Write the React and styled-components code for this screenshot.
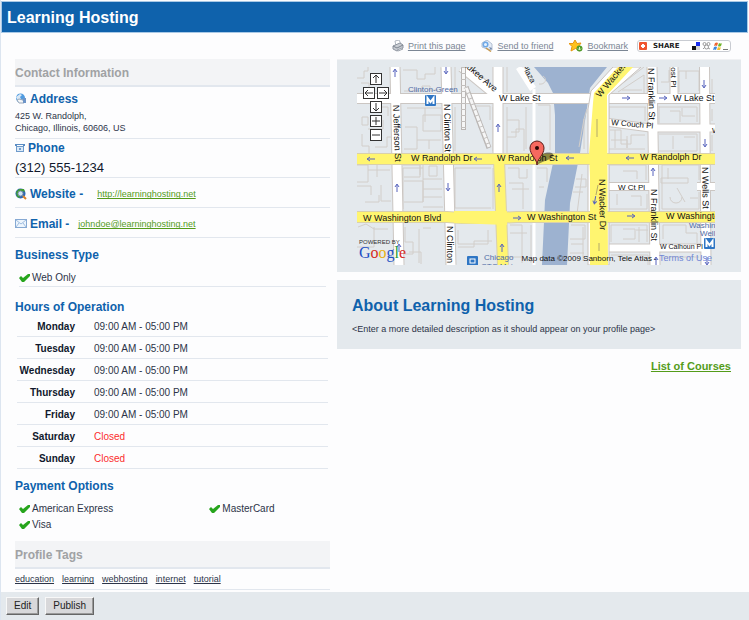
import React from 'react';
import styled, { createGlobalStyle } from 'styled-components';

const color = {
  blue: '#0f62ac',
  green: '#549c1a',
  text: '#2c3448',
  muted: '#a0a2a4',
  panel: '#e4e9ed',
  line: '#e2e7ee',
  red: '#fb2c2c',
};

const HOURS = [
  { day: 'Monday', time: '09:00 AM - 05:00 PM' },
  { day: 'Tuesday', time: '09:00 AM - 05:00 PM' },
  { day: 'Wednesday', time: '09:00 AM - 05:00 PM' },
  { day: 'Thursday', time: '09:00 AM - 05:00 PM' },
  { day: 'Friday', time: '09:00 AM - 05:00 PM' },
  { day: 'Saturday', time: null },
  { day: 'Sunday', time: null },
];

const PAYMENTS = ['American Express', 'MasterCard', 'Visa'];

const TAGS = ['education', 'learning', 'webhosting', 'internet', 'tutorial'];

export default function App() {
  const hoursRows = HOURS.map(({ day, time }) => (
    <tr key={day}>
      <Day scope="row">{day}</Day>
      <Time $closed={!time}>{time || 'Closed'}</Time>
    </tr>
  ));

  return (
    <Page>
      <GlobalStyle />
      <Header>
        <h1>Learning Hosting</h1>
      </Header>
      <Toolbar>
        <ToolLink href="#print">
          <PrintIcon />
          <span>Print this page</span>
        </ToolLink>
        <ToolLink href="#send">
          <SendIcon />
          <span>Send to friend</span>
        </ToolLink>
        <ToolLink href="#bookmark">
          <StarIcon />
          <span>Bookmark</span>
        </ToolLink>
        <ShareButton type="button">
          <SharePlusIcon />
          <span>SHARE</span>
          <ShareSitesIcon />
        </ShareButton>
      </Toolbar>
      <Columns>
        <div>
          <PanelTitle>Contact Information</PanelTitle>
          <AddressBlock>
            <Title>
              <AddressIcon />
              Address
            </Title>
            <address>
              425 W. Randolph,
              <br />
              Chicago, Illinois, 60606, US
            </address>
          </AddressBlock>
          <PhoneBlock>
            <Title>
              <PhoneIcon />
              Phone
            </Title>
            <p>(312) 555-1234</p>
          </PhoneBlock>
          <ContactRow $gap="14px">
            <Title>
              <WebsiteIcon />
              Website -
            </Title>
            <GreenLink href="#website">http://learninghosting.net</GreenLink>
          </ContactRow>
          <ContactRow $gap="9px">
            <Title>
              <EmailIcon />
              Email -
            </Title>
            <GreenLink href="#email">johndoe@learninghosting.net</GreenLink>
          </ContactRow>
          <Section>
            <Title>Business Type</Title>
            <CheckList $underlined>
              <CheckItem>
                <CheckIcon />
                Web Only
              </CheckItem>
            </CheckList>
          </Section>
          <Section>
            <Title>Hours of Operation</Title>
            <HoursTable>
              <tbody>{hoursRows}</tbody>
            </HoursTable>
          </Section>
          <Section>
            <Title>Payment Options</Title>
            <CheckList>
              {PAYMENTS.map((name) => (
                <CheckItem key={name}>
                  <CheckIcon />
                  {name}
                </CheckItem>
              ))}
            </CheckList>
          </Section>
          <PanelTitle>Profile Tags</PanelTitle>
          <Tags>
            {TAGS.map((tag) => (
              <a key={tag} href={`#${tag}`}>
                {tag}
              </a>
            ))}
          </Tags>
        </div>
        <RightColumn>
          <MapPanel>
            <MapFrame>
              <MapDrawing />
              <MapControls />
              <MapCredit>
                Map data ©2009 Sanborn, Tele Atlas - <a href="#terms">Terms of Use</a>
              </MapCredit>
            </MapFrame>
          </MapPanel>
          <About>
            <h2>About Learning Hosting</h2>
            <p>&lt;Enter a more detailed description as it should appear on your profile page&gt;</p>
          </About>
          <Courses href="#courses">List of Courses</Courses>
        </RightColumn>
      </Columns>
      <Footer>
        <FooterButton type="button">Edit</FooterButton>
        <FooterButton type="button">Publish</FooterButton>
      </Footer>
    </Page>
  );
}

function MapControls() {
  return (
    <Controls>
      <MapButton type="button" $area="up" aria-label="pan up">
        <Glyph d="M5 9V1M2 4l3-3 3 3" />
      </MapButton>
      <MapButton type="button" $area="left" aria-label="pan left">
        <Glyph d="M9 5H1M4 2L1 5l3 3" />
      </MapButton>
      <MapButton type="button" $area="right" aria-label="pan right">
        <Glyph d="M1 5h8M6 2l3 3-3 3" />
      </MapButton>
      <MapButton type="button" $area="down" aria-label="pan down">
        <Glyph d="M5 1v8M2 6l3 3 3-3" />
      </MapButton>
      <MapButton type="button" $area="in" aria-label="zoom in">
        <Glyph d="M1 5h8M5 1v8" />
      </MapButton>
      <MapButton type="button" $area="out" aria-label="zoom out">
        <Glyph d="M1 5h8" />
      </MapButton>
    </Controls>
  );
}

function Glyph({ d }) {
  return (
    <svg width="10" height="10" viewBox="0 0 10 10" fill="none" stroke="#333">
      <path d={d} />
    </svg>
  );
}

// blue one-way arrows: x, y, rotation
const ARROWS = [
  [38, 6, -90],
  [89, 3, 90],
  [141, 61, -90],
  [14, 92, 180],
  [121, 92, 180],
  [213, 91, 180],
  [273, 91, 180],
  [269, 31, 0],
  [306, 31, 0],
  [347, 17, 90],
  [348, 76, 90],
  [40, 121, -90],
  [91, 120, 90],
  [142, 121, -90],
  [145, 181, -90],
  [160, 151, 0],
  [274, 149, 0],
  [238, 133, 100],
  [296, 105, -90],
  [299, 194, -90],
  [350, 194, 90],
  [42, 181, -90],
];

function MapDrawing() {
  return (
    <MapSvg viewBox="0 0 358 198" preserveAspectRatio="xMidYMid slice" role="img" aria-label="Map">
      <rect width="358" height="198" fill="#e4e9ed" />
      {/* river */}
      <path
        d="M177 0L191 16L196 26L198 48V86L196 96L188 133L185 198H210L213 136L221 96L223 86L230 41L233 21L250 0Z"
        fill="#9db2d0"
      />
      {/* building outlines */}
      <g fill="none" stroke="#d2ceca">
        <path d="M0 11h7V4h4V0M4 16h8v5M5 50h6v8H5zM11 62h15v-9M5 67v12h7v7M18 80h12v-10h5M14 40h17v9" />
        <path d="M46 3h14v9h8v-5h10V0M47 24h18v-5h8v4h8M50 41h18v14M68 41h16M66 48h18v16H66zM48 60h12v22H47M60 73h24M72 82v-9" />
        <path d="M46 98h17v12H47M63 98v10M47 114h19v21H47M66 112h19M66 98v37M66 122h19M66 130h19M72 99h8v10h-8z" />
        <path d="M0 98h11v17H0M11 103h22M20 98v12M0 119h14v9M24 118v16h10M8 135h14v-7M46 142V101h20M66 140h20" />
        <path d="M1 160l8-3 8 5h14M48 160v15h8v12h-8M66 161h8M62 162v34M101 163v14h30v-14M101 180h16v-6h18M17 160v20H0M52 185h12v12" />
        <path d="M98 0v24M98 40v44M98 101v40h36M98 101h36M98 159v38M136 101v41M119 39h14v14M136 40v44M114 3v10" />
        <path d="M150 0v25M150 40v46M150 53h12v12h-8M150 70h9v-8h8v22M151 101h11v10h8v-9M152 116h14v26M155 122h17M169 40v42" />
        <path d="M153 158h12v38M153 166h17M174 158v38M151 190h14M181 38h12v45M180 101h10v14M182 120h5" />
        <path d="M186 9c5 3 2 9-4 8M227 52v30M222 80l5-28 3-10M225 107l-5 40M219 112h10v8h-11M216 125h10M214 158h14v14h-15M214 177h12M226 160v34M213 186h14" />
        <path d="M252 39v13M252 40h37M288 40v14M253 63h11v14h10v-9h14M252 82h36M258 63v18M270 69v12M254 73h16v8" />
        <path d="M252 98h37v15M252 98v15M266 104h14v8M252 126v16M252 142h38v-15M260 127v11M274 129h10v10M254 158h36v17M254 158v17M266 162h12v10h-12M282 160v15M254 188h37v10M279 163h12" />
        <path d="M302 39v17M302 40h38v15M313 44h10v11M325 41v8h13M302 67h38v17M302 84h38M316 69v13M327 70h11M304 15h8v-12M322 25V4h20v20M329 4v8M355 42v12M355 68v16M355 12v14" />
        <path d="M305 98h37v15M305 98v44h37v-17M304 111h27v5h-27zM313 130c0 8 12 8 12 0M320 121l8 14M333 131h8M311 101v11M306 158h23v8h11v10M306 158v14M306 190h36" />
        <path d="M253 26L287 0M287 26V8L261 25M265 23h20" />
      </g>
      {/* side streets, casing below and white on top */}
      <g fill="none" stroke="#cbc6c2">
        <g strokeWidth="11">
          <path d="M0 31.500H358M38 0L42 198M89 0L94 198M141 0V90M295 0L298 198M347.500 0L349 198" />
          <path d="M105 0L139 28" />
        </g>
        <g strokeWidth="9">
          <path d="M317 0V30M248 55L293 61H358M250 119.500H296M340 119.500H358M250 181H347" />
        </g>
      </g>
      <g fill="none" stroke="#fff">
        <g strokeWidth="9">
          <path d="M0 31.500H358M38 0L42 198M89 0L94 198M141 0V90M295 0L298 198M347.500 0L349 198" />
          <path d="M105 0L139 28" />
        </g>
        <g strokeWidth="7">
          <path d="M317 0V30M248 55L293 61H358M250 119.500H296M340 119.500H358M250 181H347" />
        </g>
        <path d="M177 22V198" strokeWidth="3" />
        <path d="M162 0L176 22" strokeWidth="7" />
      </g>
      <path d="M231 198V42L234 24L256 0H284L252 28V198Z" fill="#fff" stroke="#c8c2be" />
      {/* rail tracks */}
      <g fill="none">
        <path d="M106.500 0V63M109 20L132 81" stroke="#b9b5b3" strokeWidth="5" />
        <path d="M106.500 0V62M109 20L132 80" stroke="#f6f6f6" strokeWidth="3" />
        <path d="M106.500 0V63M109 20L132 81" stroke="#c2bfbd" strokeWidth="5" strokeDasharray="1 5" />
      </g>
      {/* main roads */}
      <g fill="none" stroke="#d9d0ac" strokeWidth="12">
        <path d="M0 92H358M0 150H90L105 151H140L160 150H358M142 92L146 198" />
      </g>
      <path d="M0 92H358M0 150H90L105 151H140L160 150H358M142 92L146 198" fill="none" stroke="#fff570" strokeWidth="10" />
      <path d="M97 144H150V158L97 156Z" fill="#fff570" />
      <path d="M233 198V110L232 87L236 36L237 26L261 0H276L250 28L251 198Z" fill="#fff570" />
      <path d="M240 52V70M241 118L239 128M242 176V184" stroke="#b3a96a" />
      {ARROWS.map(([x, y, turn]) => (
        <path
          key={`${x}-${y}`}
          d="M-4 0H3M1 -2L4 0L1 2"
          transform={`translate(${x} ${y}) rotate(${turn})`}
          fill="none"
          stroke="#5663bd"
        />
      ))}
      <MapLabels>
        <text x="54" y="94">W Randolph Dr</text>
        <text x="140" y="94">W Randolph St</text>
        <text x="283" y="93">W Randolph Dr</text>
        <text x="6" y="154">W Washington Blvd</text>
        <text x="170" y="153">W Washington St</text>
        <text x="309" y="152">W Washington St</text>
        <text x="142" y="34">W Lake St</text>
        <text x="316" y="34">W Lake St</text>
        <text transform="translate(36 38) rotate(88)">N Jefferson St</text>
        <text transform="translate(87 37) rotate(89)">N Clinton St</text>
        <text transform="translate(90 159) rotate(90)">N Clinton St</text>
        <text transform="translate(291 1) rotate(89)">N Franklin St</text>
        <text transform="translate(294 122) rotate(90)">N Franklin St</text>
        <text transform="translate(242 112) rotate(89)">N Wacker Dr</text>
        <text transform="translate(243 31) rotate(-50)">W Wacker Dr</text>
        <text transform="translate(345 100) rotate(89)">N Wells St</text>
        <text transform="translate(92 -14) rotate(41)">Milwaukee Ave</text>
      </MapLabels>
      <MapLabels $size="8px">
        <text transform="translate(314 -5) rotate(90)">Post Pl</text>
        <text transform="translate(161 -8) rotate(62)">N Plaza</text>
        <text transform="translate(254 58) rotate(5)">W Couch Pl</text>
        <text x="261" y="123">W Ct Pl</text>
        <text x="355" y="66">W Couch Pl</text>
      </MapLabels>
      <MapLabels $size="7px">
        <text x="303" y="182">W Calhoun Pl</text>
      </MapLabels>
      <MapLabels $size="8px" $blue>
        <text x="51" y="25">Clinton-Green</text>
        <text x="127" y="193">Chicago</text>
        <text x="124" y="202">CTC Metra</text>
        <text x="332" y="161">Washington</text>
        <text x="343" y="169">Wells</text>
      </MapLabels>
      {[
        [68, 28],
        [347, 171],
      ].map(([x, y]) => (
        <g key={x}>
          <rect x={x} y={y} width="11" height="11" rx="1" fill="#2f76c4" />
          <path
            d={`M${x + 2.5} ${y + 9}V${y + 3}L${x + 5.5} ${y + 7}L${x + 8.5} ${y + 3}V${y + 9}`}
            fill="none"
            stroke="#fff"
            strokeWidth="2"
          />
        </g>
      ))}
      <rect x="110" y="189" width="11" height="11" rx="1" fill="#2f76c4" />
      <rect x="113" y="192" width="5" height="4" fill="none" stroke="#fff" />
      {/* marker with its shadow */}
      <path d="M180 98L186 87C191 84 198 86 196 89C194 93 188 93 180 98Z" fill="#000" opacity="0.450" />
      <path d="M180 98C180 92 173 88 173 81A7 7 0 0 1 187 81C187 88 180 92 180 98Z" fill="#f7695f" stroke="#5b1c18" />
      <circle cx="180" cy="81" r="2" fill="#2a0604" />
      <PoweredBy x="2" y="177">POWERED BY</PoweredBy>
      <GoogleLogo x="2" y="191">
        <tspan fill="#1d4fc4">G</tspan>
        <tspan fill="#d62a1f">o</tspan>
        <tspan fill="#e8b012">o</tspan>
        <tspan fill="#1d4fc4">g</tspan>
        <tspan fill="#1f9a38">l</tspan>
        <tspan fill="#d62a1f">e</tspan>
      </GoogleLogo>
    </MapSvg>
  );
}

function PrintIcon() {
  return (
    <svg width="12" height="12" viewBox="0 0 12 12">
      <path d="M3 1l4-1 2 4-5 2z" fill="#fff" stroke="#b4bac3" />
      <path d="M1 6l7-3 3 2v3l-6 3-4-2z" fill="#c9cdd3" stroke="#8d949f" />
      <path d="M1 6l4 2 6-3" fill="none" stroke="#7d8591" />
      <path d="M5 10l5-2 1 1-5 2z" fill="#fff" stroke="#9aa1ab" />
    </svg>
  );
}

function SendIcon() {
  return (
    <svg width="12" height="12" viewBox="0 0 12 12">
      <path d="M1 3l5-3 5 4v6l-5-1-5-2z" fill="#e3ebf6" stroke="#b3bfd2" />
      <circle cx="4.500" cy="4.500" r="3" fill="#6fa8e6" />
      <circle cx="4.500" cy="4.500" r="1.500" fill="#e6f2ff" />
      <path d="M5 8l5 3.500" stroke="#c79a52" strokeWidth="1.500" />
      <path d="M8 7l3 1-1 2z" fill="#6f83a8" />
    </svg>
  );
}

function StarIcon() {
  return (
    <svg width="14" height="14" viewBox="0 0 14 14">
      <path d="M6 1l2 3.500 4-.5-2.500 3.500L11 12 6.500 9.500 2 12l1-4.500L0 4.500h4z" fill="#ffc21c" stroke="#e8960f" />
      <circle cx="10.500" cy="9.500" r="3" fill="#4f9a28" />
      <path d="M10.500 8v3M9 9.500l1.500 1.500L12 9.500" fill="none" stroke="#d8f0c4" />
    </svg>
  );
}

function SharePlusIcon() {
  return (
    <svg width="8" height="8" viewBox="0 0 8 8">
      <rect width="8" height="8" rx="1" fill="#f0552f" />
      <path d="M4 2v4M2 4h4" stroke="#fff" strokeWidth="2" />
    </svg>
  );
}

function ShareSitesIcon() {
  return (
    <svg width="37" height="8" viewBox="0 0 37 8">
      <rect x="4" width="4" height="4" fill="#1b2ff0" />
      <rect y="4" width="4" height="4" fill="#111" />
      <rect x="4" y="4" width="4" height="4" fill="#d5d5d5" />
      <g fill="none" stroke="#9c9c9c">
        <circle cx="12.500" cy="2" r="1.500" />
        <circle cx="16.500" cy="2" r="1.500" />
        <circle cx="14.500" cy="5" r="2" />
        <path d="M11 7l2-2M18 7l-2-1" />
      </g>
      <path d="M23 1q2-1 3 0l-1 3q-1-1-3 0z" fill="#f0652f" />
      <path d="M27 1q2 1 3 0l-1 3q-2 1-3 0z" fill="#6fb52c" />
      <path d="M22 5q2-1 3 0l-1 3q-1-1-3 0z" fill="#3d86dd" />
      <path d="M26 5q2 1 3 0l-1 3q-2 1-3 0z" fill="#f6c02e" />
      <path d="M31 7.500h5" stroke="#777" />
    </svg>
  );
}

function AddressIcon() {
  return (
    <svg width="12" height="12" viewBox="0 0 12 12">
      <circle cx="5.500" cy="5" r="4.500" fill="#4f9be0" />
      <path d="M1 4l4-3 2 1-2 2 1 2-3 2z" fill="#d9e8f6" />
      <path d="M2 7l2-1 4 1 1 3-5 0z" fill="#f4f6f8" stroke="#98a8ba" />
      <path d="M8 5h3v5H8z" fill="#6e95c8" />
    </svg>
  );
}

function PhoneIcon() {
  return (
    <svg width="10" height="10" viewBox="0 0 10 10">
      <path d="M0 3V1h10v2H8V2H2v1z" fill="#5a8cc4" />
      <rect x="1.500" y="3.500" width="7" height="5" fill="#dceaf8" stroke="#6f9bcb" />
      <path d="M4 5h2v2H4z" fill="#6f9bcb" />
    </svg>
  );
}

function WebsiteIcon() {
  return (
    <svg width="12" height="12" viewBox="0 0 12 12">
      <circle cx="5.500" cy="5.500" r="5" fill="#2b67b4" />
      <path d="M1 4l3-3 5 0 1 3-3-1-3 3 1 4-3-1z" fill="#3f9b35" />
      <circle cx="5.500" cy="5.500" r="2.500" fill="#cfe3f5" stroke="#7d93ab" />
      <path d="M8 8l3 3" stroke="#d9822c" strokeWidth="2" />
    </svg>
  );
}

function EmailIcon() {
  return (
    <svg width="12" height="10" viewBox="0 0 12 10">
      <rect x="0.500" y="0.500" width="11" height="8" fill="#edf5fd" stroke="#86a9d3" />
      <path d="M1 1l5 4 5-4M1 8l3-4M11 8L8 4" fill="none" stroke="#9fbde0" />
    </svg>
  );
}

function CheckIcon() {
  return (
    <svg width="11" height="10" viewBox="0 0 11 10">
      <path d="M0 5l2-2 2 2 5-4 2 0v2L5 9H3z" fill="#27a51d" />
    </svg>
  );
}

const GlobalStyle = createGlobalStyle`
  * {
    box-sizing: border-box;
  }

  body {
    margin: 0;
    background: #fdfdfe;
    color: ${color.text};
    font: 9px/12px 'Liberation Sans', Arial, sans-serif;
  }

  h1, h2, h3, p, ul {
    margin: 0;
    padding: 0;
  }

  a {
    color: inherit;
    text-decoration-skip-ink: none;
  }

  svg {
    flex: none;
  }
`;

const Page = styled.div`
  display: flex;
  flex-direction: column;
  min-height: 100vh;
  padding-top: 1px;
  border-left: 1px solid #dce5f0;
`;

const Header = styled.header`
  display: flex;
  align-items: center;
  height: 32px;
  margin-right: 1px;
  padding: 2px 5px 0;
  background: ${color.blue};
  border: 1px solid #a9c9e6;

  h1 {
    color: white;
    font-size: 16px;
    line-height: 20px;
  }
`;

const Toolbar = styled.nav`
  display: flex;
  justify-content: flex-end;
  align-items: center;
  gap: 16px;
  height: 26px;
  padding-right: 18px;
  color: #7b8694;
`;

const ToolLink = styled.a`
  display: flex;
  align-items: center;
  gap: 4px;
  text-decoration: none;

  span {
    text-decoration: underline;
  }
`;

const ShareButton = styled.button`
  display: flex;
  align-items: center;
  justify-content: space-between;
  width: 94px;
  height: 12px;
  margin-left: -7px;
  padding: 0 1px;
  background: white;
  border: 1px solid #c9ccd2;
  border-radius: 3px;
  color: #222;
  font: bold 7px/8px 'DejaVu Sans', sans-serif;

  span {
    flex: 1;
    padding-left: 6px;
    text-align: left;
  }
`;

const Columns = styled.main`
  flex: 1;
  display: grid;
  grid-template-columns: minmax(0, 315fr) minmax(0, 404fr);
  gap: 7px;
  padding: 0 8px 2px 14px;
`;

const PanelTitle = styled.h2`
  height: 28px;
  background: #f3f4f6;
  border-bottom: 2px solid ${color.line};
  color: ${color.muted};
  font-size: 12px;
  line-height: 28px;
`;

const Title = styled.h3`
  display: flex;
  align-items: center;
  gap: 3px;
  color: ${color.blue};
  font-size: 12px;
  line-height: 14px;
`;

const AddressBlock = styled.section`
  padding: 5px 0 4px;
  border-bottom: 1px solid ${color.line};

  address {
    margin-top: 4px;
    font-style: normal;
  }
`;

const PhoneBlock = styled.section`
  padding-top: 2px;
  border-bottom: 1px solid ${color.line};

  p {
    margin-top: 4px;
    color: #10182c;
    font-size: 13px;
    line-height: 18px;
  }
`;

const ContactRow = styled.section`
  display: flex;
  align-items: center;
  gap: ${({ $gap }) => $gap};
  height: 30px;
  padding-top: 2px;
  border-bottom: 1px solid ${color.line};
`;

const GreenLink = styled.a`
  color: ${color.green};
`;

const Section = styled.section`
  padding-top: 10px;
`;

const CheckList = styled.ul`
  display: grid;
  grid-template-columns: 62fr 38fr;
  margin: 8px 4px ${({ $underlined }) => ($underlined ? '3px' : '8px')};
  list-style: none;
  border-bottom: ${({ $underlined }) => ($underlined ? `1px solid ${color.line}` : 'none')};
`;

const CheckItem = styled.li`
  display: flex;
  align-items: center;
  gap: 2px;
  font-size: 10px;
  line-height: 16px;
`;

const HoursTable = styled.table`
  width: calc(100% - 4px);
  margin: 0 2px;
  border-collapse: collapse;
  font-size: 10px;

  th,
  td {
    height: 22px;
    padding: 4px 0 0;
    border-bottom: 1px solid ${color.line};
  }
`;

const Day = styled.th`
  width: 58px;
  color: #10182c;
  text-align: right;
`;

const Time = styled.td`
  && {
    padding-left: 19px;
  }
  color: ${({ $closed }) => ($closed ? color.red : color.text)};
`;

const Tags = styled.div`
  display: flex;
  align-items: center;
  gap: 8px;
  height: 21px;
  border-bottom: 1px solid ${color.line};
`;

const RightColumn = styled.div`
  display: flex;
  flex-direction: column;
`;

const MapPanel = styled.section`
  padding: 7px 26px 7px 20px;
  background: ${color.panel};
  border-top: 1px solid #f0f1f3;
`;

const MapFrame = styled.div`
  position: relative;
  height: 198px;
  overflow: hidden;
`;

const MapSvg = styled.svg`
  display: block;
  width: 100%;
  height: 100%;
`;

const MapLabels = styled.g`
  font-size: ${({ $size }) => $size || '9px'};
  fill: ${({ $blue }) => ($blue ? '#4f6ba5' : '#111')};
`;

const PoweredBy = styled.text`
  font-size: 6px;
  fill: #333;
`;

const GoogleLogo = styled.text`
  font: 16px 'Liberation Serif', serif;
`;

const Controls = styled.div`
  position: absolute;
  top: 6px;
  left: 6px;
  display: grid;
  grid-template-columns: repeat(4, 6px);
  grid-template-rows: repeat(5, 12px);
  grid-template-areas:
    '. up up .'
    'left left right right'
    '. down down .'
    '. in in .'
    '. out out .';
  gap: 2px 1px;
`;

const MapButton = styled.button`
  grid-area: ${({ $area }) => $area};
  display: flex;
  align-items: center;
  justify-content: center;
  width: 12px;
  height: 12px;
  padding: 0;
  background: white;
  border: 1px solid #333;
`;

const MapCredit = styled.p`
  position: absolute;
  right: 3px;
  bottom: 0;
  color: #111;
  font-size: 8px;
  white-space: nowrap;

  a {
    color: #6f86d6;
    font-size: 9px;
    text-decoration: none;
  }
`;

const About = styled.section`
  margin-top: 8px;
  padding: 16px 15px 14px;
  background: ${color.panel};

  h2 {
    color: ${color.blue};
    font-size: 16px;
    line-height: 20px;
  }

  p {
    margin-top: 7px;
  }
`;

const Courses = styled.a`
  align-self: flex-end;
  margin: 10px 10px 0;
  color: ${color.green};
  font-size: 11px;
  font-weight: bold;
  line-height: 14px;
`;

const Footer = styled.footer`
  display: flex;
  align-items: center;
  gap: 6px;
  height: 28px;
  padding: 0 5px;
  background: ${color.panel};
`;

const FooterButton = styled.button`
  height: 18px;
  padding: 0 7px;
  background: #d8d8da;
  border: 1px solid;
  border-color: #f8f8f8 #666 #666 #f8f8f8;
  box-shadow: inset -1px -1px #9a9a9a;
  color: #222;
  font: 10px/14px 'Liberation Sans', Arial, sans-serif;
`;
